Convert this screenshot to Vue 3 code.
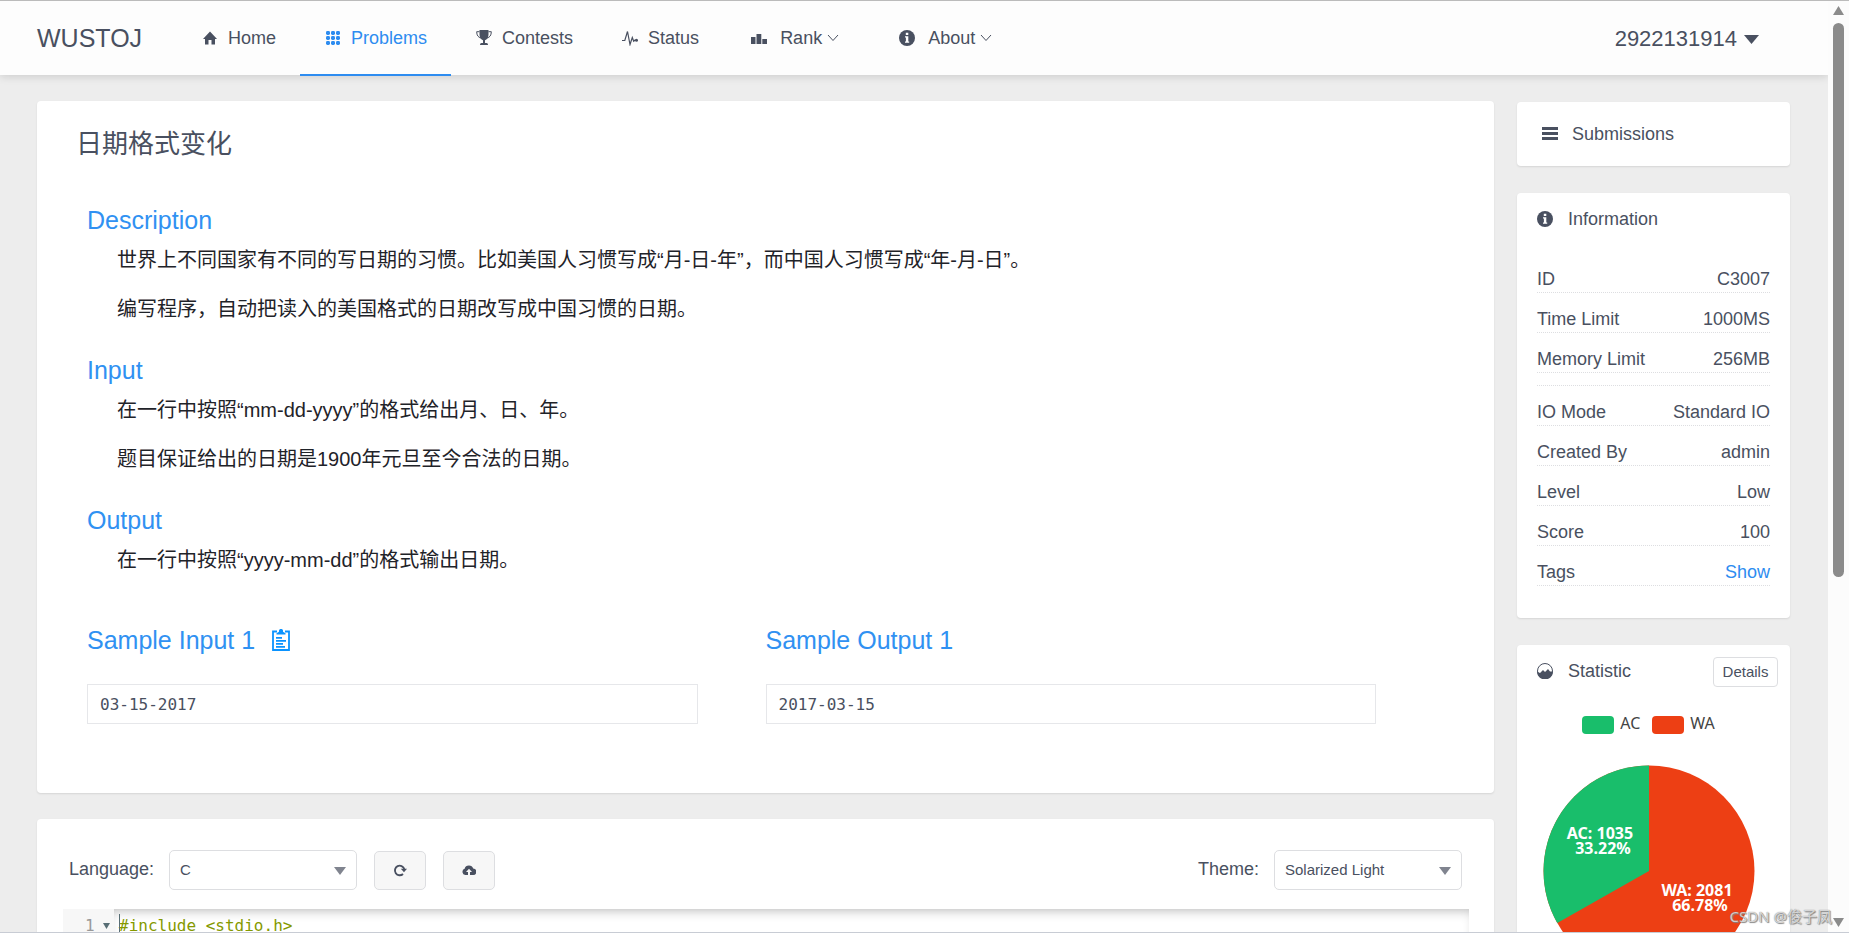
<script setup>
import { ref } from 'vue'

const navItems = [
  { name: 'Home', icon: 'home' },
  { name: 'Problems', icon: 'grid', active: true },
  { name: 'Contests', icon: 'trophy' },
  { name: 'Status', icon: 'pulse' },
  { name: 'Rank', icon: 'bars', menu: true },
  { name: 'About', icon: 'info', menu: true }
]

const sections = [
  {
    title: 'Description',
    lines: [
      '世界上不同国家有不同的写日期的习惯。比如美国人习惯写成“月-日-年”，而中国人习惯写成“年-月-日”。',
      '编写程序，自动把读入的美国格式的日期改写成中国习惯的日期。'
    ]
  },
  {
    title: 'Input',
    lines: ['在一行中按照“mm-dd-yyyy”的格式给出月、日、年。', '题目保证给出的日期是1900年元旦至今合法的日期。']
  },
  { title: 'Output', lines: ['在一行中按照“yyyy-mm-dd”的格式输出日期。'] }
]

const limits = [
  ['ID', 'C3007'],
  ['Time Limit', '1000MS'],
  ['Memory Limit', '256MB']
]
const details = [
  ['IO Mode', 'Standard IO'],
  ['Created By', 'admin'],
  ['Level', 'Low'],
  ['Score', '100']
]

const language = ref('C')
const theme = ref('Solarized Light')
const code = ref('#include <stdio.h>')
</script>

<template>
  <div class="shell">
    <div class="page">
      <header class="topbar">
        <div class="brand">WUSTOJ</div>
        <nav class="nav">
          <a v-for="item in navItems" :key="item.name" href="#" class="nav-item" :class="{ active: item.active, menu: item.menu }">
            <svg class="icon" viewBox="0 0 16 16">
              <path v-if="item.icon === 'home'" d="M8 1.500 1 9h2v5.500h3.500V10h3v4.500H13V9h2z" />
              <g v-else-if="item.icon === 'grid'">
                <template v-for="y in 3" :key="y">
                  <rect v-for="x in 3" :key="x" :x="x * 5 - 4" :y="y * 5 - 4" width="4" height="4" rx="1.400" />
                </template>
              </g>
              <g v-else-if="item.icon === 'trophy'">
                <path d="M3.500 0h9v4.500c0 3-1.500 5-3.500 5.700V13h1.500c1 0 1.500.800 1.500 2H4c0-1.200.500-2 1.500-2H7v-2.800C5 9.500 3.500 7.500 3.500 4.500z" />
                <path d="M3.500 1.700H.700c0 3.600 1.500 5.800 4.300 6.300M12.500 1.700h2.800c0 3.600-1.500 5.800-4.300 6.300" fill="none" stroke="currentColor" />
              </g>
              <g v-else-if="item.icon === 'pulse'">
                <path d="M0 10.500h2.800L5.500 1.500 8 14.500l2.300-7 1.400 3.700 1.200-1H15" fill="none" stroke="currentColor" stroke-width="1.200" />
                <circle cx="14.500" cy="10.300" r="1.500" />
              </g>
              <path v-else-if="item.icon === 'bars'" d="M0 7h4.500v7H0zM5.500 4h4.800v10H5.500zM11.300 9H16v5h-4.700z" />
              <g v-else>
                <circle cx="8" cy="8" r="8" />
                <path d="M6.800 2.700h2.500V5H6.800zM6 6.300h3.300v5.200h.900v1.200H6v-1.200h.900v-4H6z" fill="#fff" />
              </g>
            </svg>
            <span>{{ item.name }}</span>
            <svg v-if="item.menu" class="chevron" viewBox="0 0 12 8"><path d="M1 1l5 5.500L11 1" fill="none" stroke="currentColor" /></svg>
          </a>
        </nav>
        <button class="user" type="button">
          2922131914
          <svg class="user-arrow" viewBox="0 0 15 9"><path d="M0 0h15L7.500 9z" /></svg>
        </button>
      </header>

      <div class="content">
        <main class="main">
          <article class="card problem">
            <h1>日期格式变化</h1>
            <div class="statement">
              <section v-for="s in sections" :key="s.title" class="part">
                <h2>{{ s.title }}</h2>
                <p v-for="line in s.lines" :key="line">{{ line }}</p>
              </section>
              <div class="samples">
                <section>
                  <h2>
                    Sample Input 1
                    <button class="copy" type="button" aria-label="Copy">
                      <svg viewBox="0 0 18 22">
                        <path d="M5 2.500H1V21h16V2.500h-4" fill="none" stroke="currentColor" stroke-width="1.800" />
                        <path d="M4.500 5.500V4.300L7 2.800V1.500C7 .500 8 0 9 0s2 .500 2 1.500v1.300l2.500 1.500v1.200zM4 8h6v1.700H4zM4 11h10v1.700H4zM4 14h7v1.700H4zM4 17h9v1.700H4z" />
                      </svg>
                    </button>
                  </h2>
                  <pre>03-15-2017</pre>
                </section>
                <section>
                  <h2>Sample Output 1</h2>
                  <pre>2017-03-15</pre>
                </section>
              </div>
            </div>
          </article>

          <section class="card submit">
            <div class="toolbar">
              <label for="language">Language:</label>
              <div class="select">
                <select id="language" v-model="language"><option>C</option><option>C++</option></select>
                <svg viewBox="0 0 12 8"><path d="M0 0h12L6 8z" /></svg>
              </div>
              <button class="tool" type="button" aria-label="Reset">
                <svg viewBox="0 0 14 14">
                  <path d="M10 11A4.800 4.800 0 1 1 11.300 6" fill="none" stroke="currentColor" stroke-width="1.900" />
                  <path d="M7.800 5.800H14L11 9.300z" />
                </svg>
              </button>
              <button class="tool" type="button" aria-label="Upload">
                <svg viewBox="0 0 14 14">
                  <path d="M3.300 12A3.200 3.200 0 0 1 2.600 5.800 4.500 4.500 0 0 1 11.200 5.600 3.200 3.200 0 0 1 11 12H8V9h2L7 5.800 4 9h2v3z" />
                </svg>
              </button>
              <label class="theme-label" for="theme">Theme:</label>
              <div class="select">
                <select id="theme" v-model="theme"><option>Solarized Light</option><option>Monokai</option></select>
                <svg viewBox="0 0 12 8"><path d="M0 0h12L6 8z" /></svg>
              </div>
            </div>
            <div class="editor">
              <div class="gutter">
                <span>1</span>
                <svg viewBox="0 0 7 6"><path d="M0 0h7L3.500 6z" /></svg>
              </div>
              <div class="source">
                <span class="caret"></span>
                <textarea v-model="code" aria-label="Source code" spellcheck="false" rows="12"></textarea>
              </div>
            </div>
          </section>
        </main>

        <aside class="side">
          <a href="#" class="card submissions">
            <svg class="icon" viewBox="0 0 16 16"><path d="M0 1h16v3H0zM0 6h16v3H0zM0 11h16v3H0z" /></svg>
            Submissions
          </a>

          <section class="card info">
            <h3>
              <svg class="icon" viewBox="0 0 16 16">
                <circle cx="8" cy="8" r="8" />
                <path d="M6.800 2.700h2.500V5H6.800zM6 6.300h3.300v5.200h.900v1.200H6v-1.200h.900v-4H6z" fill="#fff" />
              </svg>
              Information
            </h3>
            <dl class="first">
              <div v-for="[k, v] in limits" :key="k"><dt>{{ k }}</dt><dd>{{ v }}</dd></div>
            </dl>
            <dl>
              <div v-for="[k, v] in details" :key="k"><dt>{{ k }}</dt><dd>{{ v }}</dd></div>
              <div><dt>Tags</dt><dd><a href="#">Show</a></dd></div>
            </dl>
          </section>

          <section class="card stats">
            <div class="stats-head">
              <h3>
                <svg class="icon" viewBox="0 0 16 16">
                  <circle cx="8" cy="8" r="7.500" fill="none" stroke="currentColor" stroke-width="1" />
                  <path d="M0 8.500 3 10l3-3 2 2 3-3 2 2.500h3A8 8 0 0 1 0 8.500z" />
                </svg>
                Statistic
              </h3>
              <button type="button">Details</button>
            </div>
            <div class="chart">
              <div class="legend">
                <i class="ac"></i><span>AC</span>
                <i class="wa"></i><span>WA</span>
              </div>
              <svg class="pie" viewBox="0 0 212 212">
                <circle cx="106" cy="106" r="105.500" fill="#ed3f14" />
                <path d="M106 106V.500A105.500 105.500 0 0 0 14.300 158.100z" fill="#19be6b" />
                <g class="pie-text">
                  <text x="57" y="74">AC: 1035</text>
                  <text x="60" y="89">33.22%</text>
                  <text x="154" y="131">WA: 2081</text>
                  <text x="157" y="146">66.78%</text>
                </g>
              </svg>
            </div>
          </section>
        </aside>
      </div>
    </div>

    <div class="scrollbar">
      <svg viewBox="0 0 11 9"><path d="M5.500 0 11 9H0z" /></svg>
      <div class="track"><div class="thumb"></div></div>
      <svg viewBox="0 0 11 9"><path d="M0 0h11L5.500 9z" /></svg>
    </div>
    <div class="watermark">CSDN @俊子凤</div>
  </div>
</template>

<style>
body {
  background: #ededed;
}
</style>

<style scoped>
* {
  box-sizing: border-box;
}
.shell {
  position: relative;
  display: flex;
  height: 100vh;
  overflow: hidden;
  border-top: 1px solid #bbb;
  border-bottom: 1px solid #c8ccd4;
  color: #495060;
  font: 18px/24px "Liberation Sans", Arial, "Noto Sans CJK SC", sans-serif;
}
.page {
  flex: 1;
  min-width: 0;
  background: #ededed;
}
h1, h2, h3, p, pre, dl, dd {
  margin: 0;
  font-weight: 400;
}
a {
  color: inherit;
  text-decoration: none;
}
button, select, textarea {
  margin: 0;
  color: inherit;
  font-family: inherit;
}
svg {
  display: block;
  flex: none;
  fill: currentColor;
}
.icon {
  width: 16px;
  height: 16px;
}

/* top navigation */
.topbar {
  display: flex;
  align-items: center;
  height: 74px;
  padding: 0 69px 0 37px;
  background: #fdfdfd;
  box-shadow: 0 2px 8px rgba(0, 0, 0, 0.13);
}
.brand {
  width: 140px;
  font-size: 25px;
}
.nav {
  display: flex;
  flex: 1;
  align-self: stretch;
}
.nav-item {
  display: flex;
  align-items: center;
  gap: 10px;
  height: 75px;
  padding: 0 24px 0 25px;
  border-bottom: 2px solid transparent;
}
.nav-item.menu {
  gap: 13px;
  margin-right: 7px;
  padding: 0 25px 0 28px;
}
.nav-item.active {
  color: #2d8cf0;
  border-color: #2d8cf0;
}
.chevron {
  width: 12px;
  height: 8px;
  margin-left: -8px;
}
.user {
  display: flex;
  align-items: center;
  gap: 7px;
  padding: 2px 0 0;
  border: 0;
  background: none;
  font-size: 22px;
}
.user-arrow {
  width: 15px;
  height: 9px;
}

/* columns */
.content {
  display: flex;
  gap: 23px;
  padding: 26px 38px 0 37px;
}
.main {
  display: flex;
  flex: 1;
  flex-direction: column;
  gap: 26px;
  min-width: 0;
}
.side {
  display: flex;
  flex: none;
  flex-direction: column;
  gap: 27px;
  width: 273px;
  padding-top: 1px;
}
.card {
  border-radius: 4px;
  background: #fff;
  box-shadow: 0 1px 2px rgba(0, 0, 0, 0.1);
}

/* problem statement */
.problem {
  padding-bottom: 69px;
}
h1 {
  padding: 24px 39px 0;
  font-size: 26px;
  line-height: 38px;
}
.statement {
  padding: 42px 50px 0;
}
h2 {
  display: flex;
  align-items: center;
  color: #3091f2;
  font-size: 25px;
  line-height: 30px;
}
.part {
  margin-bottom: 31px;
}
p {
  margin: 10px 0 19px 30px;
  color: #1f2329;
  font-size: 20px;
  line-height: 30px;
}
.part p:last-child {
  margin-bottom: 0;
}
.samples {
  display: grid;
  grid-template-columns: 1fr 1fr;
  padding-top: 19px;
}
.copy {
  padding: 0;
  margin-left: 17px;
  border: 0;
  background: none;
  color: #0a93ff;
}
.copy svg {
  width: 18px;
  height: 22px;
}
pre {
  width: 90%;
  margin-top: 29px;
  padding: 1px 12px 0;
  border: 1px solid #e6e7ea;
  font: 16px/37px "DejaVu Sans Mono", monospace;
}

/* code submission */
.submit {
  padding: 31px 25px 0 26px;
}
.toolbar {
  display: flex;
  align-items: center;
  padding: 0 7px 0 6px;
}
.toolbar label {
  padding-bottom: 2px;
}
.select {
  position: relative;
  width: 188px;
  margin-left: 15px;
}
.select select {
  display: block;
  width: 100%;
  height: 40px;
  padding: 0 10px 1px;
  border: 1px solid #dddee1;
  border-radius: 5px;
  background: #fff;
  font-size: 15px;
  appearance: none;
}
.select svg {
  position: absolute;
  top: 17px;
  right: 11px;
  width: 12px;
  height: 8px;
  color: #80848f;
  pointer-events: none;
}
.tool {
  display: flex;
  align-items: center;
  justify-content: center;
  width: 52px;
  height: 39px;
  margin-left: 17px;
  border: 1px solid #dddee1;
  border-radius: 5px;
  background: #f7f7f7;
}
.tool svg {
  width: 14px;
  height: 14px;
}
.theme-label {
  margin-left: auto;
}
.editor {
  display: flex;
  margin-top: 19px;
}
.gutter {
  display: flex;
  gap: 8px;
  width: 51px;
  padding: 5px 6px 0 22px;
  background: #f7f7f7;
  color: #999;
  font: 16px/24px "DejaVu Sans Mono", monospace;
}
.gutter svg {
  width: 7px;
  height: 6px;
  margin-top: 9px;
  color: #586e75;
}
.source {
  position: relative;
  flex: 1;
  box-shadow: inset 0 7px 12px -6px rgba(0, 0, 0, 0.3);
}
.caret {
  position: absolute;
  top: 5px;
  left: 5px;
  width: 1px;
  height: 24px;
  background: #586e75;
}
textarea {
  display: block;
  width: 100%;
  padding: 5px;
  border: 0;
  outline: 0;
  background: none;
  color: #859900;
  font: 16px/24px "DejaVu Sans Mono", monospace;
  resize: none;
}

/* sidebar */
.submissions {
  display: flex;
  align-items: center;
  gap: 14px;
  height: 64px;
  padding: 0 25px;
}
h3 {
  display: flex;
  align-items: center;
  gap: 15px;
  font-size: 18px;
  line-height: 24px;
}
.info {
  padding: 14px 20px 32px;
}
.info dl div {
  display: flex;
  justify-content: space-between;
  height: 40px;
  padding-top: 14px;
  border-bottom: 1px dotted #dddee1;
}
.info dl.first {
  margin: 22px 0 12px;
}
.info dl + dl {
  border-top: 1px dotted #dddee1;
}
dd a {
  color: #2d8cf0;
}
.stats-head {
  display: flex;
  align-items: center;
  justify-content: space-between;
  padding: 12px 12px 0 20px;
}
.stats-head h3 {
  padding-bottom: 3px;
}
.stats-head button {
  width: 65px;
  height: 30px;
  padding: 0 0 2px;
  border: 1px solid #dddee1;
  border-radius: 4px;
  background: #fff;
  font-size: 15px;
}
.chart {
  display: flex;
  flex-direction: column;
  align-items: center;
  padding: 24px 10px 30px 0;
  font-family: "Noto Sans", "Open Sans", sans-serif;
}
.legend {
  display: flex;
  align-items: center;
  color: #444;
  font-size: 16px;
}
.legend i {
  width: 32px;
  height: 18px;
  margin: 3px 6px 0 12px;
  border-radius: 4px;
}
.legend i:first-child {
  margin-left: 0;
}
.ac {
  background: #19be6b;
}
.wa {
  background: #ed3f14;
}
.pie {
  width: 212px;
  height: 212px;
  margin-top: 30px;
}
.pie-text {
  fill: #fff;
  font-size: 16px;
  font-weight: 700;
  text-anchor: middle;
}

/* page scrollbar */
.scrollbar {
  display: flex;
  flex: none;
  flex-direction: column;
  align-items: center;
  width: 21px;
  padding: 5px 0;
  background: #fcfcfc;
  color: #8b8b8b;
}
.scrollbar svg {
  width: 11px;
  height: 9px;
}
.track {
  flex: 1;
  width: 11px;
  padding: 8px 0;
}
.thumb {
  height: 62.500%;
  border-radius: 6px;
  background: #8b8b8b;
}
.watermark {
  position: absolute;
  right: 17px;
  bottom: 4px;
  color: rgba(255, 255, 255, 0.7);
  font-family: "Noto Sans", "Noto Sans CJK SC", sans-serif;
  font-size: 15px;
  text-shadow: 0 0 1px #666, 1px 1px 1px #888;
}
</style>
